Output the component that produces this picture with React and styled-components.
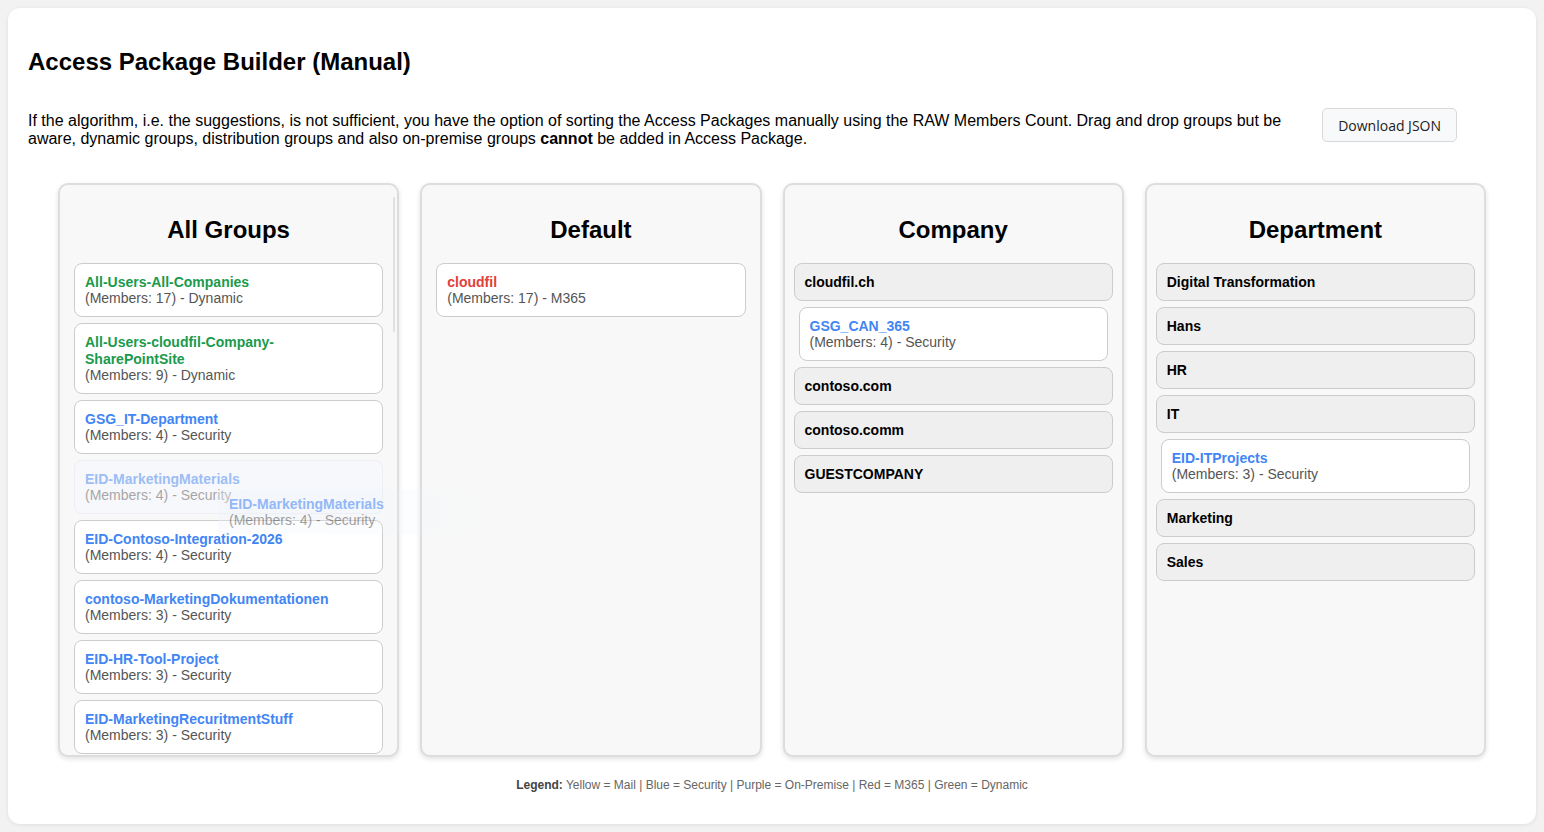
import React from 'react';
import styled, { createGlobalStyle } from 'styled-components';

const GlobalStyle = createGlobalStyle`
  body {
    margin: 0;
    padding: 8px;
    background: #f2f2f2;
    font-family: "Liberation Sans", Arial, sans-serif;
    color: #000;
  }
`;

const colors = {
  green: '#1a9a4c',
  blue: '#4285f4',
  red: '#e0403a',
  yellow: '#c9a000',
  purple: '#8e44ad',
};

const Card = styled.div`
  background: #fff;
  border-radius: 12px;
  box-shadow: 0 1px 4px rgba(0, 0, 0, 0.08);
  padding: 20px 20px 12px;
  min-height: calc(100vh - 48px);
  position: relative;
`;

const Title = styled.h2`
  font-size: 24px;
  font-weight: bold;
  margin: 20px 0;
`;

const IntroRow = styled.div`
  display: flex;
  align-items: flex-start;
`;

const Intro = styled.p`
  flex: 1;
  font-size: 16px;
  line-height: 18.4px;
  margin: 16px 0;
`;

const DownloadButton = styled.button`
  margin: 12px 59px 0 30px;
  height: 34px;
  padding: 0 15px;
  background: #f8f9fa;
  border: 1px solid #d8d8d8;
  border-radius: 5px;
  font-family: "Open Sans", "Noto Sans", sans-serif;
  font-size: 14px;
  color: #222;
  cursor: pointer;
`;

const Columns = styled.div`
  display: flex;
  gap: 21px;
  padding: 0 30px;
  margin-top: 18px;
`;

const Column = styled.div`
  position: relative;
  flex: 1;
  min-width: 0;
  height: 574px;
  box-sizing: border-box;
  border: 2px solid #ddd;
  border-radius: 10px;
  background: #f8f8f8;
  box-shadow: 0 2px 5px rgba(0, 0, 0, 0.12);
  padding: 0 9px;
  overflow: hidden;
`;

const ScrollArea = styled.div`
  height: 100%;
  overflow-y: auto;
  margin: 0 -9px;
  padding: 0 9px;
  scrollbar-width: none;
`;

/* thin scroll thumb drawn over the column edge */
const ScrollThumb = styled.div`
  position: absolute;
  right: 2px;
  top: 12px;
  width: 2px;
  height: 135px;
  border-radius: 1px;
  background: #e0e0e0;
`;

const ColumnTitle = styled.h2`
  font-size: 24px;
  font-weight: bold;
  text-align: center;
  margin: 31px 0 19px;
  line-height: 28px;
`;

const List = styled.div`
  display: flex;
  flex-direction: column;
  gap: 6px;
  padding-bottom: 12px;
`;

const Item = styled.div`
  margin: 0 5px;
  background: ${({ $dragging }) => ($dragging ? '#f5f8fe' : '#fff')};
  border: 1px solid ${({ $dragging }) => ($dragging ? '#e2e6ee' : '#ccc')};
  border-radius: 8px;
  padding: 10px;
  font-size: 14px;
  opacity: ${({ $dragging }) => ($dragging ? 0.5 : 1)};
`;

const ItemName = styled.div`
  font-weight: bold;
  line-height: 17px;
  color: ${({ $color }) => $color};
  word-break: break-word;
`;

const ItemMeta = styled.div`
  line-height: 15px;
  color: #555;
`;

const Folder = styled.div`
  background: #efefef;
  border: 1px solid #ccc;
  border-radius: 8px;
  padding: 10px;
  font-size: 14px;
  line-height: 16px;
  font-weight: bold;
`;

const Ghost = styled.div`
  position: absolute;
  left: 210px;
  top: 482px;
  width: 280px;
  padding: 6px 11px;
  font-size: 14px;
  background: linear-gradient(90deg, rgba(240, 245, 253, 0.6), rgba(240, 245, 253, 0.2) 70%, rgba(255, 255, 255, 0));
  opacity: 0.55;
  pointer-events: none;
`;

const Legend = styled.p`
  text-align: center;
  font-size: 12px;
  color: #666;
  margin: 20px 0 0;
  line-height: 16px;

  b {
    color: #444;
  }
`;

const typeColor = {
  Dynamic: colors.green,
  Security: colors.blue,
  M365: colors.red,
  Mail: colors.yellow,
  OnPremise: colors.purple,
};

const allGroups = [
  { name: 'All-Users-All-Companies', members: 17, type: 'Dynamic' },
  { name: 'All-Users-cloudfil-Company-SharePointSite', members: 9, type: 'Dynamic' },
  { name: 'GSG_IT-Department', members: 4, type: 'Security' },
  { name: 'EID-MarketingMaterials', members: 4, type: 'Security', dragging: true },
  { name: 'EID-Contoso-Integration-2026', members: 4, type: 'Security' },
  { name: 'contoso-MarketingDokumentationen', members: 3, type: 'Security' },
  { name: 'EID-HR-Tool-Project', members: 3, type: 'Security' },
  { name: 'EID-MarketingRecuritmentStuff', members: 3, type: 'Security' },
  { name: 'EID-Finance-Reporting', members: 3, type: 'Security' },
  { name: 'EID-Sales-Leads', members: 3, type: 'Security' },
  { name: 'GSG_Sales_Team', members: 3, type: 'Security' },
  { name: 'EID-Project-Phoenix', members: 2, type: 'Security' },
  { name: 'EID-Legal-Documents', members: 2, type: 'Security' },
  { name: 'GSG_HR_Department', members: 2, type: 'Security' },
  { name: 'EID-Support-Tickets', members: 2, type: 'Security' },
  { name: 'EID-Dev-Environment', members: 2, type: 'Security' },
];

const GroupItem = ({ group }) => (
  <Item $dragging={group.dragging}>
    <ItemName $color={typeColor[group.type]}>{group.name}</ItemName>
    <ItemMeta>
      (Members: {group.members}) - {group.type}
    </ItemMeta>
  </Item>
);

const companies = [
  { name: 'cloudfil.ch', groups: [{ name: 'GSG_CAN_365', members: 4, type: 'Security' }] },
  { name: 'contoso.com', groups: [] },
  { name: 'contoso.comm', groups: [] },
  { name: 'GUESTCOMPANY', groups: [] },
];

const departments = [
  { name: 'Digital Transformation', groups: [] },
  { name: 'Hans', groups: [] },
  { name: 'HR', groups: [] },
  { name: 'IT', groups: [{ name: 'EID-ITProjects', members: 3, type: 'Security' }] },
  { name: 'Marketing', groups: [] },
  { name: 'Sales', groups: [] },
];

const FolderColumn = ({ title, folders }) => (
  <Column>
    <ColumnTitle>{title}</ColumnTitle>
    <List>
      {folders.map((f) => (
        <React.Fragment key={f.name}>
          <Folder>{f.name}</Folder>
          {f.groups.map((g) => (
            <GroupItem key={g.name} group={g} />
          ))}
        </React.Fragment>
      ))}
    </List>
  </Column>
);

const App = () => (
  <>
    <GlobalStyle />
    <Card>
      <Title>Access Package Builder (Manual)</Title>
      <IntroRow>
        <Intro>
          If the algorithm, i.e. the suggestions, is not sufficient, you have the option of sorting
          the Access Packages manually using the RAW Members Count. Drag and drop groups but be
          aware, dynamic groups, distribution groups and also on-premise groups <b>cannot</b> be
          added in Access Package.
        </Intro>
        <DownloadButton>Download JSON</DownloadButton>
      </IntroRow>
      <Columns>
        <Column>
          <ScrollArea>
            <ColumnTitle>All Groups</ColumnTitle>
            <List>
              {allGroups.map((g) => (
                <GroupItem key={g.name} group={g} />
              ))}
            </List>
          </ScrollArea>
          <ScrollThumb />
        </Column>
        <Column>
          <ColumnTitle>Default</ColumnTitle>
          <List>
            <GroupItem group={{ name: 'cloudfil', members: 17, type: 'M365' }} />
          </List>
        </Column>
        <FolderColumn title="Company" folders={companies} />
        <FolderColumn title="Department" folders={departments} />
      </Columns>
      <Legend>
        <b>Legend:</b> Yellow = Mail | Blue = Security | Purple = On-Premise | Red = M365 | Green =
        Dynamic
      </Legend>
      <Ghost>
        <ItemName $color={colors.blue}>EID-MarketingMaterials</ItemName>
        <ItemMeta>(Members: 4) - Security</ItemMeta>
      </Ghost>
    </Card>
  </>
);

export default App;
